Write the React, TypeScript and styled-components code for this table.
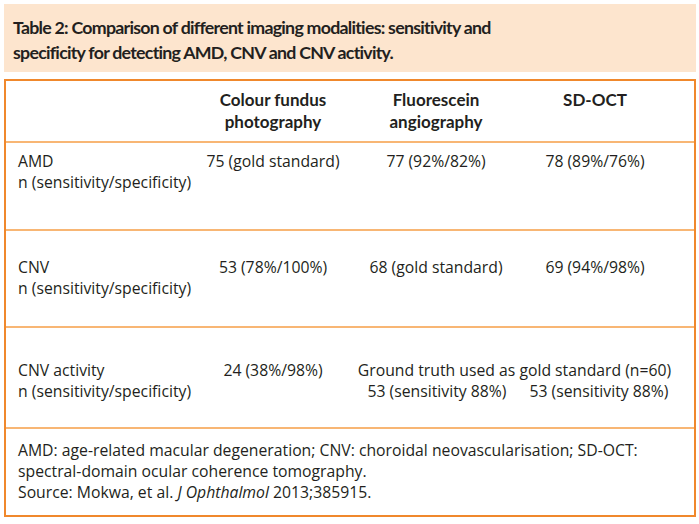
import React from 'react';
import styled, { createGlobalStyle } from 'styled-components';

const GlobalStyle = createGlobalStyle`
  html, body {
    margin: 0;
    padding: 0;
    background: #ffffff;
  }
  body {
    font-family: "Open Sans", "Liberation Sans", sans-serif;
    color: #231f20;
  }
`;

const Page = styled.div`
  width: 699px;
  height: 524px;
  padding: 4px 3px 0 4px;
  box-sizing: border-box;
  display: flex;
  flex-direction: column;
  gap: 7px;
`;

const Banner = styled.div`
  background: #fde5ce;
  padding: 11px 10px 8px 9px;
  height: 68px;
  box-sizing: border-box;
`;

const Title = styled.h2`
  margin: 0;
  font-family: Lato, "Open Sans", sans-serif;
  font-size: 17.8px;
  line-height: 25px;
  font-weight: 700;
  letter-spacing: -0.75px;
`;

const Table = styled.div`
  border: 2px solid #f0882c;
  display: flex;
  flex-direction: column;
`;

const COLUMNS = '195px 144px 182px 136px 1fr';

const Row = styled.div<{ $pt: number; $h: number }>`
  display: grid;
  grid-template-columns: ${COLUMNS};
  align-items: start;
  height: ${(p) => p.$h}px;
  padding-top: ${(p) => p.$pt}px;
  box-sizing: border-box;
  border-bottom: 2px solid #f8b674;
`;

const HeadCell = styled.div`
  font-family: Lato, "Open Sans", sans-serif;
  font-size: 17px;
  line-height: 22px;
  font-weight: 700;
  text-align: center;
`;

const LabelCell = styled.div`
  padding-left: 12px;
  font-size: 15.75px;
  line-height: 21px;
  white-space: nowrap;
`;

const Cell = styled.div`
  font-size: 15.75px;
  line-height: 21px;
  text-align: center;
  white-space: nowrap;
`;

const SpanCell = styled.div`
  grid-column: 3 / -1;
  padding-right: 10px;
  font-size: 15.75px;
  line-height: 21px;
  text-align: center;
  white-space: nowrap;
`;

const SubGrid = styled.div`
  display: grid;
  grid-template-columns: 184px 140px;
  text-align: center;
`;

const Footer = styled.div`
  padding: 11px 12px 0 12px;
  height: 86px;
  box-sizing: border-box;
  font-size: 15.75px;
  line-height: 21px;
  white-space: nowrap;
`;

const App: React.FC = () => {
  return (
    <>
      <GlobalStyle />
      <Page>
        <Banner>
          <Title>
            Table 2: Comparison of different imaging modalities: sensitivity and
            <br />
            specificity for detecting AMD, CNV and CNV activity.
          </Title>
        </Banner>
        <Table>
          <Row $pt={8} $h={62}>
            <div />
            <HeadCell>
              Colour fundus
              <br />
              photography
            </HeadCell>
            <HeadCell>
              Fluorescein
              <br />
              angiography
            </HeadCell>
            <HeadCell>SD-OCT</HeadCell>
          </Row>
          <Row $pt={8} $h={88}>
            <LabelCell>
              AMD
              <br />
              n (sensitivity/specificity)
            </LabelCell>
            <Cell>75 (gold standard)</Cell>
            <Cell>77 (92%/82%)</Cell>
            <Cell>78 (89%/76%)</Cell>
          </Row>
          <Row $pt={26} $h={97}>
            <LabelCell>
              CNV
              <br />
              n (sensitivity/specificity)
            </LabelCell>
            <Cell>53 (78%/100%)</Cell>
            <Cell>68 (gold standard)</Cell>
            <Cell>69 (94%/98%)</Cell>
          </Row>
          <Row $pt={32} $h={101}>
            <LabelCell>
              CNV activity
              <br />
              n (sensitivity/specificity)
            </LabelCell>
            <Cell>24 (38%/98%)</Cell>
            <SpanCell>
              Ground truth used as gold standard (n=60)
              <SubGrid>
                <span>53 (sensitivity 88%)</span>
                <span>53 (sensitivity 88%)</span>
              </SubGrid>
            </SpanCell>
          </Row>
          <Footer>
            AMD: age-related macular degeneration; CNV: choroidal neovascularisation; SD-OCT:
            <br />
            spectral-domain ocular coherence tomography.
            <br />
            Source: Mokwa, et al. <i>J Ophthalmol</i> 2013;385915.
          </Footer>
        </Table>
      </Page>
    </>
  );
};

export default App;
